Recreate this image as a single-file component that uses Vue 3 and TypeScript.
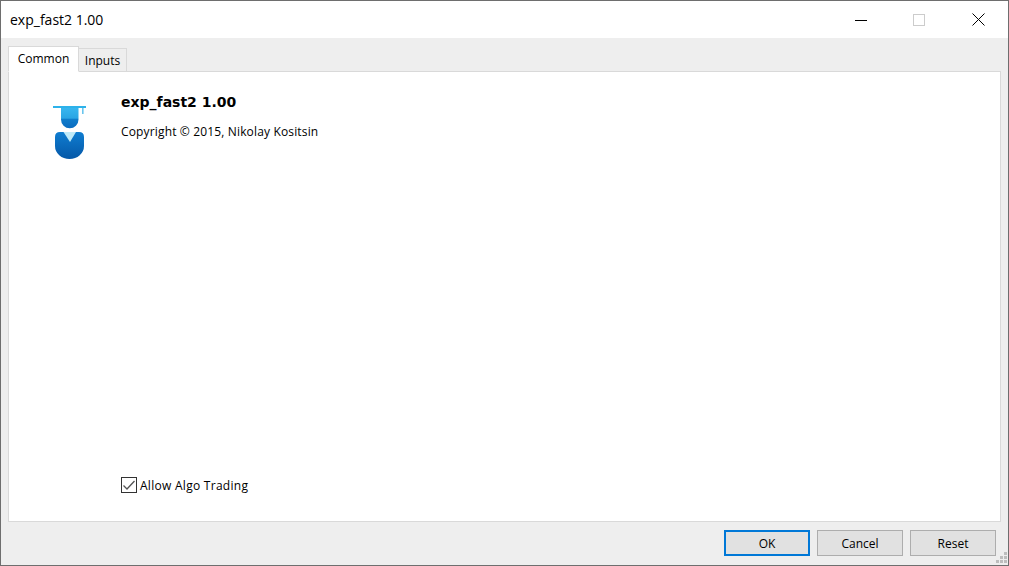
<script setup lang="ts">
const tabs: { label: string; active: boolean }[] = [
  { label: 'Common', active: true },
  { label: 'Inputs', active: false },
]
const buttons: { label: string; primary: boolean }[] = [
  { label: 'OK', primary: true },
  { label: 'Cancel', primary: false },
  { label: 'Reset', primary: false },
]
</script>

<template>
  <div class="window">
    <header class="titlebar">
      <span class="title">exp_fast2 1.00</span>
      <div class="controls">
        <span class="ctl">
          <svg width="12" height="12" viewBox="0 0 12 12"><path d="M0 6.5H12" stroke="#000" stroke-width="1" fill="none" /></svg>
        </span>
        <span class="ctl">
          <svg width="12" height="12" viewBox="0 0 12 12"><rect x="0.5" y="0.5" width="11" height="11" stroke="#ccc" fill="none" /></svg>
        </span>
        <span class="ctl">
          <svg width="13" height="13" viewBox="0 0 13 13"><path d="M0.5 0.5L12.5 12.5M12.5 0.5L0.5 12.5" stroke="#000" stroke-width="1" fill="none" /></svg>
        </span>
      </div>
    </header>

    <main class="body">
      <div class="tabs">
        <div v-for="t in tabs" :key="t.label" class="tab" :class="{ active: t.active }">{{ t.label }}</div>
      </div>
      <section class="panel">
        <div class="info">
          <svg class="logo" width="36" height="56" viewBox="0 0 36 56">
            <defs>
              <linearGradient id="cap" x1="0" y1="0" x2="0" y2="1">
                <stop offset="0" stop-color="#38b6ef" />
                <stop offset="0.5" stop-color="#2aa5e4" />
                <stop offset="0.56" stop-color="#0f7ccb" />
                <stop offset="1" stop-color="#0a6cc0" />
              </linearGradient>
              <linearGradient id="torso" x1="0" y1="0" x2="0" y2="1">
                <stop offset="0" stop-color="#0f7dd0" />
                <stop offset="1" stop-color="#0558a8" />
              </linearGradient>
            </defs>
            <rect x="0" y="1" width="33" height="2" fill="#2db2ea" />
            <rect x="29" y="3" width="1.6" height="6" fill="#6ac6ee" />
            <path d="M8 3H25.5V14.5A8.75 8.75 0 0 1 8 14.5Z" fill="url(#cap)" />
            <path d="M2 32Q2 27 7 27H26Q31 27 31 32V41A14.5 13 0 0 1 2 41Z" fill="url(#torso)" />
            <path d="M10.5 27H23L17 37Z" fill="#bfeaf8" />
          </svg>
          <div class="text">
            <h1 class="name">exp_fast2 1.00</h1>
            <p class="copy">Copyright © 2015, Nikolay Kositsin</p>
          </div>
        </div>
        <label class="check">
          <span class="box">
            <svg width="14" height="14" viewBox="0 0 14 14"><path d="M1.5 7.5L5 11L12.5 3" stroke="#555" stroke-width="1.3" fill="none" /></svg>
          </span>
          <span class="check-label">Allow Algo Trading</span>
        </label>
      </section>
      <footer class="footer">
        <button v-for="b in buttons" :key="b.label" class="btn" :class="{ primary: b.primary }">{{ b.label }}</button>
        <svg class="grip" width="11" height="11" viewBox="0 0 11 11" fill="#bdbdbd">
          <rect x="8" y="0" width="3" height="3" />
          <rect x="4" y="4" width="3" height="3" />
          <rect x="8" y="4" width="3" height="3" />
          <rect x="0" y="8" width="3" height="3" />
          <rect x="4" y="8" width="3" height="3" />
          <rect x="8" y="8" width="3" height="3" />
        </svg>
      </footer>
    </main>
  </div>
</template>

<style>
html, body { margin: 0; background: #fff; }
</style>

<style scoped>
.window {
  width: 1009px;
  height: 566px;
  box-sizing: border-box;
  border: 1px solid #6e6e6e;
  display: flex;
  flex-direction: column;
  font-family: "Open Sans", "Noto Sans", sans-serif;
  font-size: 12px;
  color: #000;
  overflow: hidden;
}
.titlebar {
  height: 37px;
  flex: none;
  background: #fff;
  display: flex;
  align-items: center;
  justify-content: space-between;
  padding-left: 9px;
}
.title { font-size: 14px; }
.controls { display: flex; padding-right: 7px; }
.ctl {
  width: 46px;
  height: 37px;
  display: flex;
  align-items: center;
  justify-content: center;
}
.ctl:nth-child(1) { margin-right: 12px; }
.ctl:nth-child(2) { margin-right: 13px; }
.body {
  flex: 1;
  background: #eee;
  display: flex;
  flex-direction: column;
  padding: 0 7px;
  min-height: 0;
}
.tabs {
  display: flex;
  align-items: flex-end;
  height: 34px;
  flex: none;
  margin-bottom: -1px;
  position: relative;
  z-index: 1;
}
.tab {
  box-sizing: border-box;
  height: 24px;
  width: 48px;
  border: 1px solid #d9d9d9;
  border-left: 0;
  text-align: center;
  line-height: 24px;
  background: #eee;
}
.tab.active {
  width: 71px;
  height: 26px;
  border-left: 1px solid #d9d9d9;
  border-bottom-color: #fff;
  background: #fff;
}
.panel {
  box-sizing: border-box;
  height: 451px;
  flex: none;
  background: #fff;
  border: 1px solid #d9d9d9;
  display: flex;
  flex-direction: column;
  justify-content: space-between;
  padding: 20px 0 26px 112px;
}
.info { display: flex; position: relative; }
.logo { position: absolute; left: -68px; top: 13px; }
.name {
  margin: 0;
  font-family: "DejaVu Sans", sans-serif;
  font-size: 14px;
  font-weight: 700;
  line-height: 20px;
}
.copy { margin: 10px 0 0; line-height: 20px; letter-spacing: 0.15px; }
.check { display: flex; align-items: center; gap: 3px; height: 20px; }
.check-label { letter-spacing: 0.28px; }
.box {
  width: 16px;
  height: 16px;
  box-sizing: border-box;
  border: 1px solid #333;
  background: #fff;
  display: flex;
  align-items: center;
  justify-content: center;
}
.footer {
  flex: 1;
  display: flex;
  align-items: flex-start;
  justify-content: flex-end;
  gap: 7px;
  padding: 8px 5px 0 0;
  position: relative;
}
.btn {
  width: 86px;
  height: 26px;
  box-sizing: border-box;
  border: 1px solid #adadad;
  background: #e1e1e1;
  font: inherit;
  color: #000;
  padding: 0;
}
.btn.primary { border: 2px solid #0078d7; }
.grip { position: absolute; right: -6px; bottom: 2px; }
</style>
